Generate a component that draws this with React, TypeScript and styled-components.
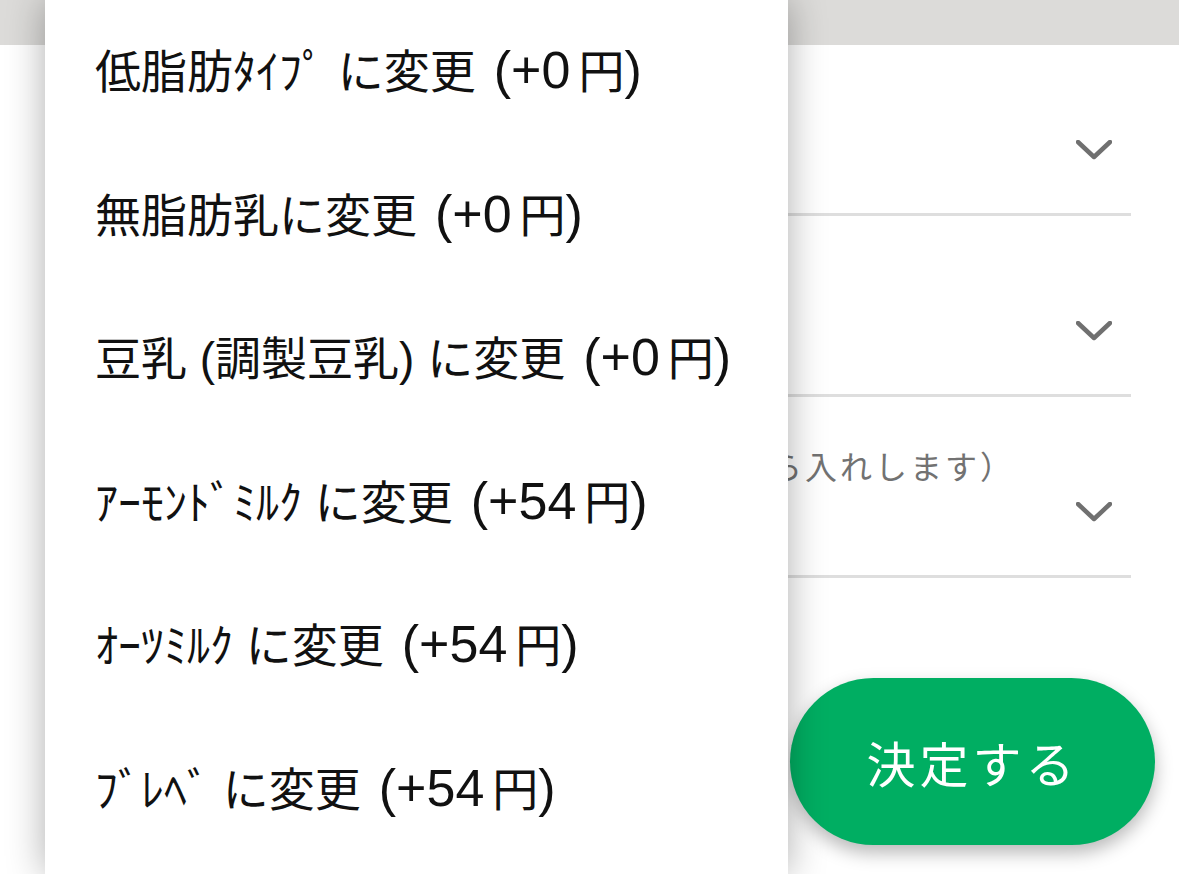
import React from "react";
import styled, { createGlobalStyle } from "styled-components";

const GlobalStyle = createGlobalStyle`
  html, body {
    margin: 0;
    padding: 0;
    background: #ffffff;
    overflow: hidden;
  }
  body {
    font-family: "Liberation Sans", "Noto Sans CJK JP", sans-serif;
  }
`;

const Page = styled.div`
  position: relative;
  width: 100%;
  height: 100vh;
  display: flex;
  flex-direction: column;
`;

const TopBar = styled.div`
  height: 45px;
  flex-shrink: 0;
  background: #dcdbd9;
`;

const Form = styled.div`
  display: flex;
  flex-direction: column;
  padding: 0 48px;
`;

const Row = styled.div<{ $height: number }>`
  height: ${(p) => p.$height}px;
  box-sizing: border-box;
  display: flex;
  flex-direction: column;
  justify-content: flex-end;
  padding-bottom: 36px;
  border-bottom: 3px solid #dedede;
`;

const Label = styled.div`
  font-family: "Noto Sans CJK JP", sans-serif;
  font-size: 32px;
  letter-spacing: 3px;
  line-height: 40px;
  padding-left: 22px;
  color: #727272;
  white-space: nowrap;
`;

const Field = styled.div`
  height: 54px;
  display: flex;
  align-items: center;
  justify-content: flex-end;
  padding-right: 19px;
`;

const Footer = styled.div`
  display: flex;
  justify-content: flex-end;
  padding: 100px 24px 0 0;
`;

const SubmitButton = styled.button`
  width: 365px;
  height: 167px;
  border: none;
  border-radius: 84px;
  background: #00ae62;
  color: #ffffff;
  font-family: "Noto Sans CJK JP", sans-serif;
  font-size: 49px;
  letter-spacing: 4px;
  box-shadow: 0 8px 18px rgba(0, 0, 0, 0.28);
`;

const Menu = styled.ul`
  position: absolute;
  top: 0;
  left: 45px;
  width: 743px;
  height: 100vh;
  margin: 0;
  padding: 0;
  list-style: none;
  background: #ffffff;
  box-shadow: 0 0 36px rgba(0, 0, 0, 0.32);
`;

const MenuItem = styled.li`
  height: 143.5px;
  display: flex;
  align-items: baseline;
  padding: 42px 0 0 50px;
  box-sizing: border-box;
  font-size: 46px;
  line-height: 52px;
  color: #111111;
  white-space: nowrap;
`;

const Amount = styled.span<{ $gap: number }>`
  margin-left: ${(p) => p.$gap}px;
  font-size: 52px;
`;

const Yen = styled.span`
  font-family: "Noto Sans CJK JP", sans-serif;
  margin-left: 8px;
`;

const Close = styled.span`
  font-size: 52px;
`;

const Chevron = () => (
  <svg width="36" height="20" viewBox="0 0 36 20">
    <path
      d="M2 2 L18 17 L34 2"
      fill="none"
      stroke="#707070"
      strokeWidth="4.5"
      strokeLinecap="round"
      strokeLinejoin="round"
    />
  </svg>
);

const options = [
  { name: "低脂肪ﾀｲﾌﾟ に変更", price: 0 },
  { name: "無脂肪乳に変更", price: 0 },
  { name: "豆乳 (調製豆乳) に変更", price: 0 },
  { name: "ｱｰﾓﾝﾄﾞﾐﾙｸ に変更", price: 54 },
  { name: "ｵｰﾂﾐﾙｸ に変更", price: 54 },
  { name: "ﾌﾞﾚﾍﾞ に変更", price: 54 },
];

const rows = [
  { height: 171, label: "" },
  { height: 181, label: "" },
  { height: 181, label: "（シロップなどのトッピングは、最後に上から入れします）" },
];

export default function App() {
  return (
    <>
      <GlobalStyle />
      <Page>
        <TopBar />
        <Form>
          {rows.map((r, i) => (
            <Row key={i} $height={r.height}>
              {r.label && <Label>{r.label}</Label>}
              <Field>
                <Chevron />
              </Field>
            </Row>
          ))}
        </Form>
        <Footer>
          <SubmitButton>決定する</SubmitButton>
        </Footer>
        <Menu>
          {options.map((o) => (
            <MenuItem key={o.name}>
              <span>{o.name}</span>
              <Amount $gap={18}>(+{o.price}</Amount>
              <Yen>円</Yen>
              <Close>)</Close>
            </MenuItem>
          ))}
        </Menu>
      </Page>
    </>
  );
}
